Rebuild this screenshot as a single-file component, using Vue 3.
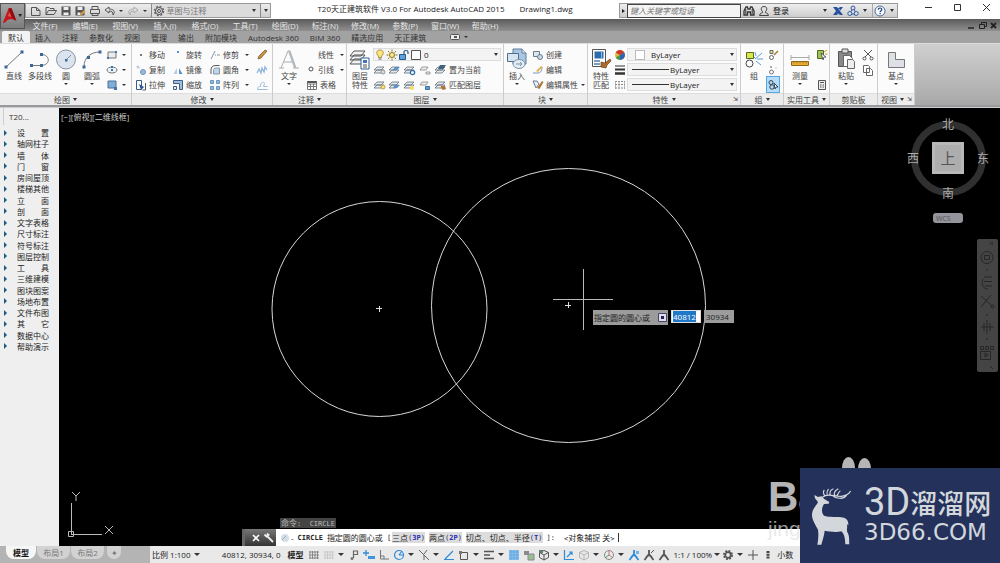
<script setup>
import { h, ref, onMounted } from 'vue'

const S = 'fill="none" stroke="#555" stroke-width="1"'
const B = 'fill="none" stroke="#2f8bd8" stroke-width="1.2"'
const layerShape = '<path d="M3 3h7l-3 3H0zM3 6h7l-3 3H0z" fill="#e4e9ee" stroke="#65717c" stroke-width=".8"/>'

const icons = {
  fresh: [12, 12, `<path d="M1.5 2.500h5l3.500 3v5h-8.500zM6.500 2.500v3h3.500" ${S}/>`],
  open: [12, 12, `<path d="M1 9.500v-7h3l1 1h4v2M1 9.500l2.500-4h8l-2.500 4z" ${S}/>`],
  save: [12, 12, '<path d="M1.500 1.500h9v9h-9z" fill="#555"/><path d="M3.500 2h5v3h-5zM3.500 7.500h5v2.500h-5z" fill="#eee"/>'],
  saveas: [12, 12, '<path d="M1.500 1.500h9v9h-9z" fill="#555"/><path d="M3.500 2h5v3h-5zM3.500 7.500h3v2.500h-3z" fill="#eee"/><path d="M6 11l1-3 3-3 1.500 1.500-3 3z" fill="#d99a3a"/>'],
  print: [12, 12, `<path d="M3 4v-2.500h6v2.500M1.500 4.500h9v4h-9zM3 8.500v2h6v-2" ${S}/>`],
  undo: [12, 12, `<path d="M5 2l-4 3 4 3v-2c3 0 4 1 4 4 3-4 0-6-4-6z" ${S}/>`],
  redo: [12, 12, '<path d="M7 2l4 3-4 3v-2c-3 0-4 1-4 4-3-4 0-6 4-6z" fill="none" stroke="#aaa"/>'],
  gear: [12, 12, `<circle cx="6" cy="6" r="4.500" fill="none" stroke="#666" stroke-width="1.500" stroke-dasharray="2 1.530"/><circle cx="6" cy="6" r="3.500" ${S}/><circle cx="6" cy="6" r="1.500" ${S}/>`],
  binoc: [12, 12, '<path d="M1 10v-4l2-4h1.500l.5 2h2l.5-2H9l2 4v4H7.500V7h-3v3z" fill="none" stroke="#333" stroke-width="1.300"/><path d="M2.800 4v5M9.200 4v5" stroke="#333"/>'],
  user: [12, 12, '<path d="M6 1.500c4 0 3 4.500 1 5.500 0 1 3.500 1 3.500 3.500h-9C1.500 8 5 8 5 7c-2-1-3-5.500 1-5.500z" fill="none" stroke="#444"/>'],
  exch: [12, 12, '<path d="M1 2h4l1 1.500L8 2h3L8 6l3 4H8L6 8.500 5 10H1l3-4z" fill="#27529d"/><path d="M7 4l3 4" stroke="#a9c1e8"/>'],
  tri: [12, 12, '<path d="M6 2.500L2.500 9h7z" fill="none" stroke="#34599a"/><g fill="#d4dfef" stroke="#34599a"><circle cx="6" cy="3" r="2"/><circle cx="2.800" cy="8.500" r="2"/><circle cx="9.200" cy="8.500" r="2"/></g>'],
  help: [12, 12, '<circle cx="6" cy="6" r="5" fill="#f8fbff" stroke="#4b6a94"/><path d="M4.300 4.700c0-2.300 3.500-2.200 3.500 0 0 1.200-1.700 1.100-1.700 2.500M6.100 8v1.300" fill="none" stroke="#21447d" stroke-width="1.200"/>'],
  line: [22, 24, '<path d="M3 20L19 5" stroke="#777"/><path d="M1.500 18.500h3v3h-3zM17.500 3.500h3v3h-3z" fill="#3c6898"/>'],
  pline: [22, 24, '<path d="M2.500 18.500h10c10-1 8-11 0-11" fill="none" stroke="#777"/><path d="M1 17h3v3H1zM11 17h3v3h-3zM11 6h3v3h-3z" fill="#3c6898"/>'],
  circle: [22, 24, '<circle cx="11" cy="12.500" r="9.500" fill="#dbe4ee" stroke="#8593a1"/><path d="M11 13l5-5" stroke="#7e8c9a"/><path d="M10 12h2.500v2.500H10z" fill="#3c6898"/>'],
  arc: [22, 24, '<path d="M3 20C3 10 10 5 19 5" fill="none" stroke="#777"/><path d="M1.500 18.500h3v3h-3zM17.500 3.500h3v3h-3zM6 9h3v3H6z" fill="#3c6898"/>'],
  rect: [12, 12, '<path d="M2 3h8v6H2z" fill="#e7edf3" stroke="#777"/><path d="M9 2h2v2H9zM1 8h2v2H1z" fill="#3c78b8"/>'],
  ellipse: [12, 12, '<ellipse cx="6" cy="6" rx="5" ry="3" fill="#eef2f5" stroke="#777"/><path d="M5 5h2v2H5zM5 2h2v2H5z" fill="#3c78b8"/>'],
  hatch: [12, 12, '<path d="M2 2h8v7H2z" fill="#82add5" stroke="#4c7298"/><path d="M8 8h3v3H8z" fill="#3c78b8"/>'],
  dot: [12, 12, '<path d="M5 5h2v2H5z" fill="#777"/>'],
  copy: [12, 12, '<circle cx="3" cy="3" r="1.500" fill="#b9cbe0"/><circle cx="8" cy="8" r="2.500" fill="#9db9d8" stroke="#6f93bb"/>'],
  stretch: [12, 12, '<path d="M1.500 1.500h5v9h-5z" fill="none" stroke="#3d5e7e"/><path d="M4 5l5 3-3 3z" fill="#27529d"/><path d="M10.500 4v7h-3" fill="none" stroke="#555"/>'],
  rotate: [12, 12, '<path d="M5 2h2v2H5z" fill="#5790cc"/>'],
  mirror: [12, 12, '<path d="M5 10H1.500L5 4z" fill="#b6cbe0"/><path d="M7 10h3.500L7 4z" fill="#5790cc"/>'],
  scale: [12, 12, '<path d="M1.500 1.500h9v9h-3v-6h-6z" fill="#9fbfe0" stroke="#3d5e7e"/><path d="M1.500 7.500h3v3h-3z" fill="#e5edf5" stroke="#3d5e7e"/>'],
  trim: [12, 12, '<path d="M2 10l4-8M6 6h1M8 6h3" stroke="#8a95a0"/>'],
  fillet: [12, 12, '<path d="M2 10V6c0-3 1.500-4.500 5-4.500h3.500" fill="none" stroke="#555"/><path d="M4.500 10V6.500c0-2 1-2.500 3-2.500h3v6z" fill="#c3d6e8" stroke="#8299ae"/>'],
  array: [12, 12, '<g fill="#8fbbe6" stroke="#6b96c0"><path d="M1.500 1.500h3v3h-3zM7.500 1.500h3v3h-3zM1.500 7.500h3v3h-3zM7.500 7.500h3v3h-3z"/></g>'],
  brush: [12, 12, '<path d="M2 10l1-3 6-6 2 1-6 7z" fill="#c8913d" stroke="#74501c" stroke-width=".7"/>'],
  explode: [12, 12, '<path d="M1 9l2-4 2 4 1-5 2 4 1-5 2 3" fill="none" stroke="#8fb4dc" stroke-width="1.300"/>'],
  offset: [12, 12, '<path d="M1.500 10.500c0-3 1-3 3-3 0-5 4-5 4-3l-1 3h4M1.500 10.500h10" fill="none" stroke="#9dbcdc"/>'],
  text: [22, 24, '<path d="M3 21l7-17h2l6 17M6 15h9M1 21h5M15 21h6" fill="none" stroke="#a9aeb3"/><path d="M11 4l6 17" stroke="#b5babf" stroke-width="2"/>'],
  leader: [12, 12, '<circle cx="7" cy="5" r="2" fill="none" stroke="#555"/>'],
  table: [12, 12, '<path d="M1.500 2.500h9v8h-9zM1.500 5h9M1.500 7.500h9M4.500 5v5.500M7.500 5v5.500" fill="#fff" stroke="#777"/><path d="M1.500 2h9v2h-9z" fill="#555"/>'],
  layers: [22, 24, '<g fill="#f0f2f4" stroke="#555"><path d="M5 12h11l-4 5H1zM5 8h11l-4 5H1zM5 4h11l-4 5H1z"/></g><path d="M12 11h8v11h-8z" fill="#fff" stroke="#305f90"/><path d="M14 13h4v3h-4z" fill="#3c78b8"/><path d="M14 18h4M14 20h4" stroke="#555"/>'],
  bulb: [12, 12, '<path d="M6 1c4 0 4 4 1.500 6v1.500h-3V7C2 5 2 1 6 1z" fill="#ffe477" stroke="#97802b" stroke-width=".8"/><path d="M4.500 10h3" stroke="#666"/>'],
  sun: [12, 12, '<circle cx="6" cy="6" r="2.500" fill="#ffe989" stroke="#8f741f"/><path d="M6 .500v2M6 9.500v2M.500 6h2M9.500 6h2M2 2l1.500 1.500M8.500 8.500L10 10M10 2L8.500 3.500M3.500 8.500L2 10" stroke="#8f741f"/>'],
  lock: [12, 12, '<path d="M1.500 5.500h6v5h-6z" fill="#5ca0de" stroke="#27598b"/><path d="M6 5V3c0-2 4-2 4 0v2" fill="none" stroke="#27598b" stroke-width="1.200"/>'],
  square: [12, 12, '<path d="M1.500 1.500h9v9h-9z" fill="#fff" stroke="#555"/>'],
  lay1: [12, 12, layerShape + '<circle cx="9" cy="8" r="2" fill="#ddd" stroke="#777" stroke-width=".7"/>'],
  lay2: [12, 12, layerShape + '<path d="M6 3h5L8 6H4z" fill="#5790cc"/>'],
  lay3: [12, 12, layerShape + '<circle cx="8.500" cy="8.500" r="2.200" fill="#e5effa" stroke="#2f6cab" stroke-width="1.200"/>'],
  lay4: [12, 12, '<path d="M3 3h6L7 6H1zM7 8h4v2H7z" fill="#eee" stroke="#888" stroke-width=".8"/>'],
  lay5: [12, 12, layerShape + '<path d="M5 1h6L8 5H3z" fill="#42617c"/>'],
  lay6: [12, 12, layerShape + '<circle cx="9" cy="8" r="2" fill="#ffe477" stroke="#97802b" stroke-width=".7"/>'],
  lay7: [12, 12, layerShape + '<path d="M6 6h5L8 9H4z" fill="#5790cc"/>'],
  lay8: [12, 12, layerShape + '<circle cx="8" cy="9" r="2" fill="#ffd95e"/>'],
  lay9: [12, 12, '<path d="M3 3h6L7 6H1z" fill="#eee" stroke="#888" stroke-width=".8"/><path d="M6.500 7.500h4v3h-4z" fill="#5ca0de" stroke="#27598b" stroke-width=".8"/>'],
  lay10: [12, 12, layerShape + '<path d="M6 7h4l1 3-3 1-2-2z" fill="#b27531"/>'],
  insert: [22, 24, '<path d="M7 2h9l4 4v11H7z" fill="#a9c6e3" stroke="#5f7d9c"/><path d="M16 2v4h4" fill="#dfeaf5" stroke="#5f7d9c"/><path d="M1.500 6.500h11v8h-11z" fill="#d8e4f0" stroke="#4e6f92"/><ellipse cx="13" cy="17" rx="6" ry="4.500" fill="#e3ebf3" stroke="#7b93ab"/><path d="M10 17h6M14 15l2 2-2 2" fill="none" stroke="#7b93ab"/>'],
  create: [12, 12, '<path d="M1.500 2.500h6v5h-6z" fill="#dce6ef" stroke="#6b7d90"/><circle cx="8" cy="8" r="2.500" fill="#c9d9e9" stroke="#6b7d90"/>'],
  edit: [12, 12, '<path d="M1 9h5c3 0 4-3 4-6" fill="none" stroke="#7799bd"/><path d="M4 7l5-5 1.500 1L6 8z" fill="#e2b451"/>'],
  attr: [12, 12, '<path d="M1 2h4l2 3-3 4z" fill="#e8eef3" stroke="#6b7d90"/><path d="M5 9l5-7 1.500 1-4 7z" fill="#b27531"/>'],
  match: [22, 24, '<path d="M2.500 2.500h13v17h-13z" fill="#fff" stroke="#555"/><path d="M4.500 4.500h9v7h-9z" fill="#2d6cac"/><path d="M11 4.500h1v7h-1z" fill="#8dbbe8"/><path d="M4 14h6M4 17h6" stroke="#4a80b5" stroke-width="1.500"/><path d="M11 15l4 1 5-4 1 2-4 4-1 3-5-1z" fill="#b06a28" stroke="#69401a" stroke-width=".7"/>'],
  wheel: [12, 12, '<circle cx="6" cy="6" r="5" fill="#e4b93b"/><path d="M6 6L1.700 3.500A5 5 0 0 1 10.300 3.500z" fill="#c6392f"/><path d="M6 6l4.300-2.500A5 5 0 0 1 6 11z" fill="#3063b0"/><path d="M6 6v5A5 5 0 0 1 1.700 8.500z" fill="#3f9b54"/>'],
  weights: [12, 12, '<path d="M1 2h10" stroke="#333"/><path d="M1 5.500h10" stroke="#333" stroke-width="2"/><path d="M1 9.500h10" stroke="#333" stroke-width="2.500"/>'],
  ltypes: [12, 12, '<path d="M1 2.500h10M1 5.500h10M1 9h10" stroke="#888" stroke-dasharray="2 1"/><path d="M1.500 2v8M5 2v8M10.500 2v8" stroke="#999" stroke-width=".7"/>'],
  group: [22, 24, '<path d="M3.500 5.500h7v6h-7z" fill="#d9e84e" stroke="#5b6a20"/><circle cx="6.500" cy="16.500" r="3.500" fill="#fff" stroke="#444"/><path d="M12 12l7-6M12 5l1 4M14 12h6M13 14l5 4M11 10l2 2" stroke="#5aa2dc"/>'],
  ug1: [12, 12, '<path d="M3 1.500h3v3H3z" fill="#dce87c" stroke="#666"/><circle cx="4.500" cy="8.500" r="2" fill="none" stroke="#666"/><path d="M7 6l4-4" stroke="#a9762a" stroke-width="1.500"/>'],
  ug2: [12, 12, '<path d="M3 2h2v2H3z" fill="#aaa"/><circle cx="4.500" cy="8" r="2" fill="none" stroke="#777"/><path d="M8 4h2" stroke="#ccc"/>'],
  ug3: [12, 12, '<circle cx="4" cy="3.500" r="2" fill="none" stroke="#345"/><circle cx="5" cy="8" r="2.200" fill="none" stroke="#345"/><path d="M7 4l4 4-2 0-1 2z" fill="#fff" stroke="#345"/>'],
  measure: [22, 24, '<path d="M2 10.500h18M2 8v5M20 8v5" stroke="#aaa"/><path d="M2.500 14.500h17v4h-17z" fill="#e6ae32" stroke="#95691a"/><path d="M5 15v1.500M8 15v1.500M11 15v1.500M14 15v1.500M17 15v1.500" stroke="#a97c22"/>'],
  qsel: [12, 12, '<path d="M1.500 1.500h6v8h-6z" fill="#9cc25b" stroke="#4f6d22"/><path d="M5 4l5 4-2 0-1 3z" fill="#fff" stroke="#444" stroke-width=".8"/><path d="M8 3l3-2M9 5h2.500" stroke="#d59827"/>'],
  calc: [12, 12, '<path d="M2.500 1.500h7v9h-7z" fill="#eee" stroke="#555"/><path d="M4 3.500h4" stroke="#555"/><path d="M4 6h4M4 8h4" stroke="#555" stroke-dasharray="1 .500"/>'],
  paste: [22, 24, '<path d="M3.500 4.500h13v15h-13z" fill="#898989" stroke="#555"/><path d="M7 2h6v4H7z" fill="#ddd" stroke="#555"/><path d="M8.500 8.500h6l3 3v8h-9z" fill="#fff" stroke="#666"/><path d="M12.500 12.500h5l2 2v7h-7z" fill="#eee" stroke="#666"/>'],
  cut: [12, 12, `<path d="M2 1l7 7M10 1L3 8" ${S}/><circle cx="2.500" cy="9.500" r="1.500" ${S}/><circle cx="9.500" cy="9.500" r="1.500" ${S}/>`],
  copyclip: [12, 12, '<path d="M1.500 1.500h5l1 1v6h-6zM4.500 4.500h4l2 2v5h-6z" fill="#fff" stroke="#666"/>'],
  base: [22, 24, '<path d="M3.500 5.500h7v7h9v8h-16z" fill="#dde0e4" stroke="#777"/>'],
  camera: [14, 8, '<rect x="1.500" y="1.500" width="9" height="5" rx="1" fill="#eee" stroke="#555"/><path d="M5 3h3v2H5z" fill="#555"/>'],
  grid: [12, 12, '<path d="M2 2v8M4.500 2v8M7 2v8M9.500 2v8M1 3h10M1 6h10M1 9h10" stroke="#777" stroke-width=".8"/>'],
  snap: [12, 12, '<path d="M2 2v8M4.500 2v8M7 2v8M9.500 2v8M1 3h10M1 6h10M1 9h10" stroke="#c4c4c4" stroke-width=".8"/>'],
  infer: [12, 12, '<path d="M5.500 9V2h4v3.500h-4" fill="none" stroke="#666" stroke-width="1.200"/><circle cx="4" cy="9.500" r="1.500" fill="#777"/>'],
  dyn: [12, 12, '<path d="M3 1v6M0 4h6" stroke="#2f8bd8" stroke-width="1.300"/><path d="M5 7h7v3H5z" fill="#3f97df"/>'],
  ortho: [12, 12, '<path d="M2.500 1v9H11M2.500 7H6v3" fill="none" stroke="#777"/>'],
  polar: [12, 12, `<circle cx="6" cy="6" r="4.500" ${B}/><path d="M6 6h5M6 6l3-4" ${B}/>`],
  iso: [12, 12, '<path d="M1 1l10 10M6 6v5M6 5l3-4" stroke="#666"/>'],
  otrack: [12, 12, `<path d="M1 10.500h10M2 10l8-8" ${B}/>`],
  osnap: [12, 12, '<path d="M2.500 3.500h7v7h-7z" fill="none" stroke="#555"/><path d="M1 2h3v3H1z" fill="#777"/>'],
  lwt: [12, 12, '<path d="M1 2.500h10M1 6h6M1 9.500h10" stroke="#555" stroke-width="1.600"/>'],
  transp: [12, 12, '<path d="M1 1h10v10H1z" fill="#8cc1ec"/><path d="M1 3h10M1 6h10M1 9h10M3 1v10M6 1v10M9 1v10" stroke="#5aa5e2" stroke-width=".7"/>'],
  cycle: [12, 12, '<path d="M1 2h5v4H1z" fill="#8a8a8a"/><path d="M5 5h6v6H5z" fill="#97bf8a" stroke="#889"/>'],
  cube: [12, 12, '<path d="M6 1.500l4.500 2v5L6 11 1.500 8.500v-5zM1.500 3.500L6 6l4.500-2.500M6 6v5" fill="none" stroke="#555"/><path d="M1 1h4v3H1z" fill="#5f7f6a"/>'],
  ucs: [12, 12, `<path d="M1.500 1v9.500H11M4 8l5-5M6 3h3v3" ${B}/>`],
  cubeoff: [12, 12, '<path d="M6 1.500l4.500 2v5L6 11 1.500 8.500v-5zM1.500 3.500L6 6l4.500-2.500M6 6v5" fill="none" stroke="#b4b4b4"/>'],
  gizmo: [12, 12, '<circle cx="6" cy="6" r="4.500" fill="none" stroke="#888"/><path d="M6 6V1M6 6l4 3" stroke="#c77"/><path d="M6 6L2 9" stroke="#4a9a5a"/>'],
  annob: [12, 12, '<path d="M6 1v4L1.500 11M6 5l4.500 6M3 8l3-2 3 2" fill="none" stroke="#2f8bd8" stroke-width="1.800"/><path d="M8 2h3v3H8z" fill="#6cb1ea"/>'],
  annog: [12, 12, '<path d="M6 1v4L1.500 11M6 5l4.500 6M3 8l3-2 3 2" fill="none" stroke="#555" stroke-width="1.800"/><path d="M8 4l3-3" stroke="#555"/>'],
  anno: [12, 12, '<path d="M6 1v4L1.500 11M6 5l4.500 6M3 8l3-2 3 2" fill="none" stroke="#555" stroke-width="1.800"/>'],
  cog: [12, 12, '<circle cx="6" cy="6" r="4" fill="none" stroke="#555" stroke-width="2" stroke-dasharray="1.800 1.340"/><circle cx="6" cy="6" r="2.800" fill="none" stroke="#555" stroke-width="1.800"/>'],
  plus: [12, 12, '<path d="M6 1v10M1 6h10" stroke="#555"/>'],
  bars: [12, 12, '<path d="M6 2v8" stroke="#444" stroke-width="3" stroke-dasharray="2 .700"/>'],
  wrench: [12, 12, '<path d="M1.500 2.500L3.500 4.500 5.500 3 4 1.500M4 4l6 6" fill="none" stroke="#eee" stroke-width="1.800"/>'],
  closew: [12, 12, '<path d="M3 3l6 6M9 3L3 9" stroke="#fff" stroke-width="1.600"/>'],
  cmd: [12, 12, '<circle cx="6" cy="6" r="4" fill="#d4dde6"/><path d="M3 8l4-4" stroke="#9fb0c2"/>'],
}

const Icon = ({ name }) => {
  const [w, ht, body] = icons[name]
  return h('svg', { width: w, height: ht, viewBox: `0 0 ${w} ${ht}`, 'aria-hidden': 'true', class: 'icon', innerHTML: body })
}
Icon.props = ['name']

const menus = ['文件(F)', '编辑(E)', '视图(V)', '插入(I)', '格式(O)', '工具(T)', '绘图(D)', '标注(N)', '修改(M)', '参数(P)', '窗口(W)', '帮助(H)']
const tabs = ['默认', '插入', '注释', '参数化', '视图', '管理', '输出', '附加模块', 'Autodesk 360', 'BIM 360', '精选应用', '天正建筑']

const panels = [
  { id: 'draw', title: '绘图', drop: true, groups: [
    { big: 'line', label: '直线' }, { big: 'pline', label: '多段线' },
    { big: 'circle', label: '圆', drop: true }, { big: 'arc', label: '圆弧', drop: true },
    { rows: [{ i: 'rect', d: 1 }, { i: 'ellipse', d: 1 }, { i: 'hatch', d: 1 }] },
  ] },
  { id: 'modify', title: '修改', drop: true, groups: [
    { rows: [{ i: 'dot', t: '移动' }, { i: 'copy', t: '复制' }, { i: 'stretch', t: '拉伸' }] },
    { rows: [{ i: 'rotate', t: '旋转' }, { i: 'mirror', t: '镜像' }, { i: 'scale', t: '缩放' }] },
    { rows: [{ i: 'trim', t: '修剪', d: 1 }, { i: 'fillet', t: '圆角', d: 1 }, { i: 'array', t: '阵列', d: 1 }] },
    { rows: [{ i: 'brush' }, { i: 'explode' }, { i: 'offset' }] },
  ] },
  { id: 'annotate', title: '注释', drop: true, groups: [
    { big: 'text', label: '文字', drop: true },
    { right: true, rows: [{ t: '线性', d: 1 }, { i: 'leader', t: '引线', d: 1 }, { i: 'table', t: '表格', pad: 1 }] },
  ] },
  { id: 'layer', title: '图层', drop: true, groups: [{ big: 'layers', label: '图层', label2: '特性' }, { slot: 'layer' }] },
  { id: 'block', title: '块', drop: true, groups: [
    { big: 'insert', label: '插入', drop: true },
    { rows: [{ i: 'create', t: '创建' }, { i: 'edit', t: '编辑' }, { i: 'attr', t: '编辑属性', d: 1 }] },
  ] },
  { id: 'props', title: '特性', drop: true, corner: true, groups: [
    { big: 'match', label: '特性', label2: '匹配' },
    { rows: [{ i: 'wheel' }, { i: 'weights' }, { i: 'ltypes' }] },
    { slot: 'props' },
  ] },
  { id: 'group', title: '组', drop: true, groups: [
    { big: 'group', label: '组' }, { rows: [{ i: 'ug1' }, { i: 'ug2' }, { i: 'ug3', on: 1 }] },
  ] },
  { id: 'util', title: '实用工具', drop: true, groups: [
    { big: 'measure', label: '测量', drop: true }, { rows: [{ i: 'qsel' }, {}, { i: 'calc' }] },
  ] },
  { id: 'clip', title: '剪贴板', groups: [
    { big: 'paste', label: '粘贴', drop: true }, { rows: [{ i: 'cut' }, { i: 'copyclip' }] },
  ] },
  { id: 'view', title: '视图', drop: true, corner: true, groups: [{ big: 'base', label: '基点', drop: true }] },
]

const layerRows = [['lay1', 'lay2', 'lay3', 'lay4', 'lay5', '置为当前'], ['lay6', 'lay7', 'lay8', 'lay9', 'lay10', '匹配图层']]

const tree = ['设　　置', '轴网柱子', '墙　　体', '门　　窗', '房间屋顶', '楼梯其他', '立　　面', '剖　　面', '文字表格', '尺寸标注', '符号标注', '图层控制', '工　　具', '三维建模', '图块图案', '场地布置', '文件布图', '其　　它', '数据中心', '帮助演示']

const statusA = ['grid', 'snap', '', 'infer', 'dyn', 'ortho', 'polar', '', 'iso', '', 'otrack', 'osnap', '', 'lwt', '', 'transp', 'cycle', 'cube', '', 'ucs', 'cubeoff', '', 'gizmo', '', 'annob', 'annog', 'anno']

const x = ref('40812')
const y = ref('30934')
const search = ref('')
const command = ref('')
const xInput = ref(null)
onMounted(() => {
  xInput.value.focus()
  xInput.value.select()
})
</script>

<template>
  <div class="app">
    <header class="head">
      <button class="logo" aria-label="应用程序菜单">
        <svg width="24" height="25" viewBox="0 0 24 25">
          <path d="M2 19L8 4h3l5 13-5-2-4 1-3 3z" fill="#c4161c" />
          <path d="M8 4h3l5 13-5-4z" fill="#8e0d12" />
          <path d="M7 12l2-4 2 5z" fill="#e0564c" />
          <path d="M18 10h4l-2 3z" fill="#222" />
        </svg>
      </button>
      <div class="titlebar">
        <div class="qat">
          <button v-for="n in ['fresh', 'open', 'save', 'saveas', 'print', 'undo']" :key="n" :aria-label="n"><Icon :name="n" /></button>
          <i class="arr"></i>
          <button aria-label="redo"><Icon name="redo" /></button>
          <i class="arr"></i>
          <button class="workspace"><Icon name="gear" /><span>草图与注释</span><i class="arr"></i></button>
          <button class="more" aria-label="自定义"><i class="arr"></i></button>
        </div>
        <h1 class="title"><span>T20天正建筑软件 V3.0 For Autodesk AutoCAD 2015</span><span>Drawing1.dwg</span></h1>
        <div class="info">
          <button class="expand" aria-label="展开"><i class="tri"></i></button>
          <input v-model="search" class="search" aria-label="搜索" placeholder="键入关键字或短语" />
          <button aria-label="搜索"><Icon name="binoc" /></button>
          <button class="login"><Icon name="user" /><span>登录</span></button>
          <i class="arr"></i>
          <button aria-label="Exchange"><Icon name="exch" /></button>
          <button aria-label="保持连接"><Icon name="tri" /></button>
          <i class="arr"></i>
          <button class="helpb" aria-label="帮助"><Icon name="help" /></button>
          <i class="arr"></i>
        </div>
        <div class="win">
          <button aria-label="最小化"><svg width="9" height="9"><path d="M1 4.500h7" stroke="#333" /></svg></button>
          <button aria-label="最大化"><svg width="9" height="9"><path d="M1.500 1.500h6v6h-6z" fill="none" stroke="#333" /></svg></button>
          <button aria-label="关闭"><svg width="9" height="9"><path d="M1 1l7 7M8 1L1 8" stroke="#333" /></svg></button>
        </div>
      </div>
      <nav class="menu">
        <button v-for="m in menus" :key="m">{{ m }}</button>
        <div class="docwin">
          <button aria-label="最小化文档"><svg width="9" height="9"><path d="M1 7h6" stroke="#222" stroke-width="1.500" /></svg></button>
          <button aria-label="还原文档"><svg width="9" height="9"><path d="M3.500 3V1.500h5v4H7M1.500 3.500h5v4h-5z" fill="none" stroke="#222" /></svg></button>
          <button aria-label="关闭文档"><svg width="9" height="9"><path d="M2 2l5 5M7 2L2 7" stroke="#222" stroke-width="1.800" /></svg></button>
        </div>
      </nav>
      <nav class="tabs">
        <button v-for="(t, i) in tabs" :key="t" :class="{ active: i === 0 }">{{ t }}</button>
        <button class="cam" aria-label="显示"><Icon name="camera" /><i class="arr"></i></button>
      </nav>
      <div class="ribbon">
        <section v-for="p in panels" :key="p.id" class="panel" :class="'p-' + p.id">
          <div class="body">
            <template v-for="(g, gi) in p.groups" :key="gi">
              <button v-if="g.big" class="big">
                <Icon :name="g.big" />
                <span>{{ g.label }}</span>
                <span v-if="g.label2">{{ g.label2 }}</span>
                <i v-if="g.drop" class="arr"></i>
              </button>
              <div v-else-if="g.rows" class="stack" :class="{ right: g.right }">
                <template v-for="(r, ri) in g.rows" :key="ri">
                  <button v-if="r.i || r.t" class="tool" :class="{ on: r.on, pad: r.pad }" :aria-label="r.t || r.i">
                    <Icon v-if="r.i" :name="r.i" /><span v-if="r.t">{{ r.t }}</span><i v-if="r.d" class="arr"></i>
                  </button>
                  <span v-else></span>
                </template>
              </div>
              <div v-else-if="g.slot === 'layer'" class="stack grow">
                <button class="combo layercombo"><Icon name="bulb" /><Icon name="sun" /><Icon name="lock" /><Icon name="square" /><span>0</span><i class="arr"></i></button>
                <div v-for="r in layerRows" :key="r[5]" class="layrow">
                  <button v-for="n in r.slice(0, 4)" :key="n" :aria-label="n"><Icon :name="n" /></button>
                  <button class="tool"><Icon :name="r[4]" /><span>{{ r[5] }}</span></button>
                </div>
              </div>
              <div v-else class="stack grow">
                <button class="combo"><b class="swatch"></b><span>ByLayer</span><i class="arr"></i></button>
                <button class="combo lt"><b class="rule"></b><span>ByLayer</span><i class="arr"></i></button>
                <button class="combo lt"><b class="rule"></b><span>ByLayer</span><i class="arr"></i></button>
              </div>
            </template>
          </div>
          <button class="ptitle"><span>{{ p.title }}</span><i v-if="p.drop" class="arr"></i><em v-if="p.corner">⇲</em></button>
        </section>
      </div>
    </header>

    <main class="main">
      <aside class="side">
        <h2>T20...</h2>
        <ul>
          <li v-for="t in tree" :key="t"><button><i class="tri"></i><span>{{ t }}</span></button></li>
        </ul>
      </aside>
      <div class="canvas">
        <p class="viewlabel">[−][俯视][二维线框]</p>
        <svg class="drawing" width="941" height="438" viewBox="0 0 941 438" fill="none" stroke="#d8d8d8">
          <circle cx="320.500" cy="201" r="107.500" />
          <circle cx="509.500" cy="197.500" r="137" />
          <path d="M317 200.500h6M320.500 198v6M506 197.500h6M509.500 194v6" stroke="#ddd" />
          <path d="M494 191.500h60M524.500 161v61" stroke="#bbb" />
          <path d="M9.500 423.500h5v5h-5zM12.500 426V395M12 426.500h31M13 384l4 4 4-4M17 388v5M46 418l8 8M54 418l-8 8" stroke="#bbb" />
        </svg>
        <div class="prompt">
          <label for="cx">指定圆的圆心或<svg width="9" height="9"><path d="M.500.500h8v8h-8z" fill="#dde" stroke="#446" /><path d="M3 3h3v3H3z" fill="#225" /></svg></label>
          <input id="cx" ref="xInput" v-model="x" />
          <input v-model="y" class="yin" aria-label="Y" />
        </div>
        <div class="compass">
          <span class="n">北</span><span class="w">西</span><span class="e">东</span><span class="s">南</span>
          <button class="top">上</button>
        </div>
        <button class="wcs">WCS</button>
        <div class="navbar">
          <svg width="21" height="133" viewBox="0 0 21 133" fill="none" stroke="#262626">
            <path d="M13 3l3 3M16 3l-3 3M10 30v2M7 38h8M7 42.500h8M8 47h7M6 40c-2 5 0 10 5 10M4 57l11 10M14 56L4 68M10 75v2M10 81v14M4 88h13M7 84v8M13 84v8M10 99v2M3.500 107.500h3v3h-3zM8.500 107.500h3v3h-3zM13.500 107.500h3v3h-3zM3.500 112.500h10v8h-10zM8 114l3 2-3 2zM13 127l3 3" />
            <circle cx="10" cy="18.500" r="6" />
            <path d="M7.500 16.500h5v4h-5z" />
            <circle cx="15.500" cy="67.500" r="1.500" />
          </svg>
        </div>
        <p class="history">命令<b>:&nbsp; CIRCLE</b></p>
        <div class="cmdline">
          <div class="grip"><button aria-label="关闭"><Icon name="closew" /></button><button aria-label="自定义"><Icon name="wrench" /></button></div>
          <Icon name="cmd" />
          <p class="cmdtext"><span>-</span><strong>CIRCLE</strong><span>指定圆的圆心或</span><b>[</b><button>三点<b>(<u>3P</u>)</b></button><button>两点<b>(<u>2P</u>)</b></button><button>切点、切点、半径<b>(<u>T</u>)</b></button><b>]:</b><span class="echo"><b>&lt;</b>对象捕捉 关<b>&gt;</b></span></p>
          <input v-model="command" class="cmdinput" aria-label="命令行" />
        </div>
      </div>
    </main>

    <footer class="status">
      <div class="layouts">
        <button class="active">模型</button><button>布局1</button><button>布局2</button><button class="add" aria-label="新建布局">✦</button>
      </div>
      <button class="scale">比例 1:100<i class="arr"></i></button>
      <span class="coords">40812, 30934, 0</span>
      <button class="model">模型</button>
      <div class="icons">
        <template v-for="(s, i) in statusA" :key="i">
          <button v-if="s" :aria-label="s"><Icon :name="s" /></button>
          <i v-else class="arr"></i>
        </template>
      </div>
      <button class="zoomv">1:1 / 100%<i class="arr"></i></button>
      <div class="icons">
        <button aria-label="工作空间"><Icon name="cog" /></button><i class="arr"></i>
        <button aria-label="注释监视器"><Icon name="plus" /></button>
        <button aria-label="单位"><Icon name="bars" /></button>
      </div>
      <button class="units">小数</button>
    </footer>

    <div class="baidu"><span>Ba</span><small>jing</small><i></i><i></i></div>
    <div class="brand">
      <svg width="60" height="66" viewBox="0 0 180 198">
        <path fill="#d3d7dc" d="M31 36L42 42 52 40 62 49 76 57 74 62 60 63C52 75 52 90 60 98 75 104 100 99 120 104 130 108 134 116 133 127L129 123C131 132 127 138 130 148 137 158 135 172 136 184L124 184C123 165 122 155 112 145 95 149 75 145 62 143 60 160 56 170 52 185L40 185C43 170 44 155 42 140 30 118 21 105 25 88 27 75 40 65 42 57L33 46Z" />
        <path fill="none" stroke="#d3d7dc" stroke-width="3.500" stroke-linecap="round" d="M56 42C72 28 92 42 112 40 128 38 136 32 139 25M62 38C57 32 57 28 60 22M69 34C68 28 70 22 73 19M78 34C77 26 82 20 87 18M92 37C88 28 95 22 102 18M98 39C105 30 98 36 108 24M85 38C95 47 118 50 127 38" />
      </svg>
      <div class="words"><div><b>3D</b>溜溜网</div><p>3D66.COM</p></div>
    </div>
  </div>
</template>

<style>
html, body { margin: 0; background: #efefef; }
body { overflow: hidden; }
.icon { display: block; flex: none; }
</style>

<style scoped>
.app { position: relative; display: flex; flex-direction: column; min-height: 100vh; font: 8px/11px "Open Sans", "Noto Sans CJK SC", sans-serif; color: #444; }
.app * { box-sizing: border-box; }
button, input { font: inherit; color: inherit; border: 0; margin: 0; padding: 0; background: none; }
button { display: flex; align-items: center; justify-content: center; white-space: nowrap; }
p, h1, h2, ul { margin: 0; padding: 0; font-weight: normal; font-size: inherit; }
li { list-style: none; }
.arr { flex: none; width: 0; height: 0; border: 2px solid transparent; border-top: 3px solid #333; border-bottom: 0; }
.tri { width: 0; height: 0; border: 3px solid transparent; border-left: 3px solid #1c5a80; border-right: 0; }

.head { position: relative; flex: none; background: #fff; border-bottom: 1px solid #c9ccd2; }
.logo { position: absolute; left: 0; top: 3px; width: 25px; height: 26px; background: linear-gradient(#a5a5a5, #7d7d7d); border: 1px solid #555; z-index: 1; }
.titlebar { display: flex; height: 19px; padding: 3px 0 0 25px; }
.qat { display: flex; align-items: center; width: 246px; height: 15px; padding-left: 3px; background: linear-gradient(#ededed, #cfcfcf); border: 1px solid #999; }
.qat button { width: 15px; height: 13px; }
.qat > .arr { margin: 0 3px 0 2px; border-width: 2px 2px 0; }
.qat .workspace { width: 113px; padding: 0 4px 0 1px; margin-left: 1px; gap: 2px; border-left: 1px solid #888; border-right: 1px solid #888; background: #dcdcdc; color: #777; }
.workspace span { flex: 1; text-align: left; }
.qat .more { width: 9px; }
.title { flex: 1; display: flex; justify-content: center; gap: 15px; color: #222; line-height: 11px; white-space: nowrap; }
.info { display: flex; align-items: center; width: 279px; height: 15px; background: linear-gradient(#eee, #cdcdcd); border: 1px solid #999; }
.info button { flex: none; width: 15px; height: 13px; }
.info .expand { width: 7px; }
.expand .tri { border-width: 2px 0 2px 3px; border-left-color: #222; }
.info .search { flex: none; width: 114px; height: 14px; padding: 0 2px; background: #f4f4f4; border: 1px solid #444; font-style: italic; }
.search::placeholder { color: #777; opacity: 1; }
.info .login { width: 61px; padding-left: 2px; justify-content: flex-start; gap: 3px; color: #111; }
.info .login + .arr { margin-left: 6px; }
.info .arr { margin: 0 3px; }
.info .helpb { margin-left: 2px; border-left: 1px solid #aaa; }
.win { display: flex; justify-content: space-between; width: 102px; padding: 0 9px 0 26px; }
.win button { height: 9px; }

.menu { display: flex; align-items: center; height: 12px; padding-left: 25px; background: linear-gradient(#5b5b5b, #8f8f8f); color: #e6e6e6; }
.menu > button { width: 40px; }
.docwin { display: flex; gap: 2px; margin-left: auto; padding-right: 2px; }
.tabs { display: flex; height: 12px; padding-left: 2px; background: #a2a2a2; color: #333; }
.tabs button { padding: 0 6px 0 5px; }
.tabs .active { padding: 0 6px; background: #f3f3f3; border-radius: 2px 2px 0 0; }
.tabs .cam { gap: 1px; margin-left: 12px; }
.cam .arr { border-width: 2px 2px 0; }

.ribbon { display: flex; background: linear-gradient(#cfcfcf, #a9a9a9); border-top: 1px solid #ddd; border-bottom: 2px solid #9a9a9a; }
.panel { display: flex; flex-direction: column; background: #fbfbfb; border-right: 1px solid #ccc; }
.body { display: flex; height: 49px; padding-top: 3px; }
.ptitle { position: relative; height: 12px; gap: 3px; background: #ececec; border-top: 1px solid #ddd; }
.ptitle em { position: absolute; right: 2px; font-size: 6px; font-style: normal; }
.ptitle .arr, .combo .arr { border-width: 3px 3px 0; border-width: 3px 2px 0; }
.big { flex-direction: column; justify-content: flex-start; width: 26px; }
.big span { line-height: 9px; }
.big .arr { margin-top: 3px; border-width: 2px 2px 0; }
.stack { display: grid; grid-template-rows: repeat(3, 15px); justify-items: start; }
.stack.right { justify-items: end; }
.stack.grow { flex: 1; justify-items: stretch; }
.tool { gap: 2px; height: 15px; }
.tool .arr { margin-left: 4px; border-width: 2px 2px 0; }
.tool.pad { padding-right: 8px; }
.tool.on { background: #b5dcf8; outline: 1px solid #5aa5dc; }
.combo { height: 13px; padding: 0 2px; margin: 1px 2px 1px 0; background: #f3f3f3; border: 1px solid #ddd; color: #222; }
.combo .arr { margin-left: auto; }
.swatch { width: 10px; height: 10px; margin: 0 6px 0 5px; background: #fff; border: 1px solid #bbb; }
.rule { width: 37px; height: 1px; margin: 0 1px 0 2px; background: #333; }
.layercombo { padding-left: 0; }
.layercombo span { margin-left: 2px; }
.layrow { display: flex; align-items: center; gap: 3px; }
.layrow .tool { gap: 2px; margin-left: 1px; }
.layrow { padding-left: 1px; }
.p-draw { width: 132px; }
.p-draw .body { padding-left: 1px; }
.p-draw .stack { margin-left: 1px; }
.p-draw .tool { gap: 0; }
.p-modify { width: 141px; }
.p-modify .body { padding-left: 3px; gap: 6px; }
.p-modify .stack + .stack { margin-left: 1px; }
.p-annotate { width: 74px; }
.p-annotate .body { padding-left: 3px; gap: 2px; }
.p-annotate .stack { flex: 1; padding-right: 2px; }
.p-layer { width: 157px; }
.p-block { width: 84px; }
.p-block .stack { padding-left: 2px; }
.p-block .tool { gap: 2px; }
.p-block .tool .arr { margin-left: 1px; }
.p-props { width: 153px; }
.p-props .stack { margin-right: 1px; }
.p-group { width: 43px; }
.p-util { width: 46px; }
.p-clip { width: 48px; }
.p-view { width: 37px; }
.p-view .ptitle { padding-right: 7px; }
.p-util .big, .p-clip .big { width: 32px; }
.p-view .big { width: 36px; }

.main { flex: 1; display: flex; }
.side { flex: none; width: 59px; background: #efefef; color: #222; }
.side h2 { padding: 3px 0 3px 5px; margin-left: 3px; border-left: 1px solid #ccc; color: #333; }
.side ul { display: grid; grid-auto-rows: 1fr; height: 225px; margin-top: 2px; }
.side li button { height: 100%; padding-left: 4px; gap: 10px; }
.canvas { position: relative; flex: 1; overflow: hidden; background: #000; }
.viewlabel { position: absolute; left: 2px; top: 3px; color: #ccc; }
.drawing { position: absolute; left: 0; top: 0; }
.prompt { position: absolute; left: 534px; top: 202px; display: flex; gap: 3px; height: 13px; color: #222; }
.prompt label { display: flex; align-items: center; justify-content: space-between; width: 75px; height: 15px; padding: 0 1px; background: #9c9c9c; }
.prompt input { width: 30px; padding: 0 1px; background: #fff; border: 1px solid #ddd; outline: 0; }
.prompt input::selection { background: #1f78c8; color: #fff; }
.prompt .yin { background: #9c9c9c; border-color: #9c9c9c; }
.compass { position: absolute; right: 14px; top: 13px; width: 75px; height: 75px; border: 7px solid #303030; border-radius: 50%; color: #aaa; font-size: 12px; line-height: 12px; }
.compass span { position: absolute; }
.n { left: 24px; top: -9px; }
.s { left: 24px; bottom: -11px; }
.w { left: -11px; top: 25px; }
.e { right: -10px; top: 25px; }
.top { position: absolute; left: 14px; top: 14px; width: 32px; height: 32px; background: #adadad; border: 3px solid #b8b8b8; color: #555; font-size: 15px; }
.wcs { position: absolute; right: 37px; top: 105px; width: 30px; height: 10px; padding-left: 3px; justify-content: flex-start; background: #94949c; border-radius: 3px; color: #555; font-size: 7px; }
.navbar { position: absolute; right: 2px; top: 131px; width: 21px; height: 133px; background: #444; border-radius: 2px; }
.history { position: absolute; left: 221px; bottom: 18px; padding: 0 1px; line-height: 10px; background: #444; color: #bbb; white-space: nowrap; }
.history b, .cmdtext b, .cmdtext strong { font: 7px "DejaVu Sans Mono", monospace; }
.cmdline { position: absolute; left: 183px; right: 0; bottom: 0; display: flex; align-items: center; height: 17px; background: #fff; color: #222; }
.grip { display: flex; align-items: center; width: 34px; height: 17px; padding-left: 4px; margin-right: 3px; background: linear-gradient(#777, #333); border-left: 3px solid #666; }
.grip button { width: 14px; }
.cmdtext { display: flex; align-items: center; gap: 4px; white-space: nowrap; }
.cmdtext .echo { margin-left: 5px; }
.cmdtext strong { font-weight: bold; }
.cmdtext b + button { margin-left: -3px; }
.cmdtext button { background: #dcdcdc; }
.cmdtext button b { color: #2a2a6a; }
.cmdtext u { color: #2a2ab8; text-decoration: none; font-weight: bold; }
.cmdinput { flex: 1; margin-left: 4px; height: 9px; border-left: 1px solid #333; outline: 0; }

.status { flex: none; display: flex; align-items: center; height: 17px; background: #e9e9e9; color: #222; }
.layouts { display: flex; flex: none; align-self: stretch; width: 150px; padding: 0 0 4px 6px; background: #b4b4b4; gap: 1px; }
.layouts button { width: 33px; background: #d2d2d2; border-radius: 0 0 8px 8px; color: #777; }
.layouts .active { width: 30px; background: #f6f6f6; color: #111; font-weight: bold; }
.layouts .add { width: 14px; margin-left: 2px; }
.status .arr { border-width: 3px 3px 0; }
.scale { gap: 4px; margin-left: 2px; }
.coords { flex: none; width: 80px; text-align: right; }
.model { margin: 0 3px 0 7px; font-weight: bold; }
.icons { display: flex; align-items: center; }
.icons button { width: 15px; }
.icons .arr { margin: 0 2px; }
.zoomv { gap: 2px; margin-left: 2px; }
.units { margin-left: 2px; }

.baidu { position: absolute; right: 200px; bottom: 8px; width: 32px; height: 90px; font-family: "Liberation Sans", sans-serif; color: #b5b5b5; }
.baidu span { display: block; margin-top: 10px; font-size: 42px; font-weight: bold; line-height: 44px; }
.baidu small { display: block; font-size: 21px; line-height: 20px; color: rgba(225, 225, 225, .7); }
.baidu i { position: absolute; left: 74px; top: -8px; width: 13px; height: 22px; border-radius: 50%; background: #b5b5b5; }
.baidu i + i { left: 90px; top: -7px; }
.brand { position: absolute; right: 0; bottom: 0; display: flex; align-items: center; width: 200px; height: 95px; padding-left: 4px; background: #24325b; color: #d3d7dc; white-space: nowrap; }
.words div { display: flex; align-items: center; height: 31px; font: 500 27px/31px "Noto Sans CJK SC", sans-serif; }
.words b { font: 38px/31px Roboto, sans-serif; }
.words p { margin-top: 2px; font: 23px/24px "DejaVu Sans", sans-serif; }
</style>
